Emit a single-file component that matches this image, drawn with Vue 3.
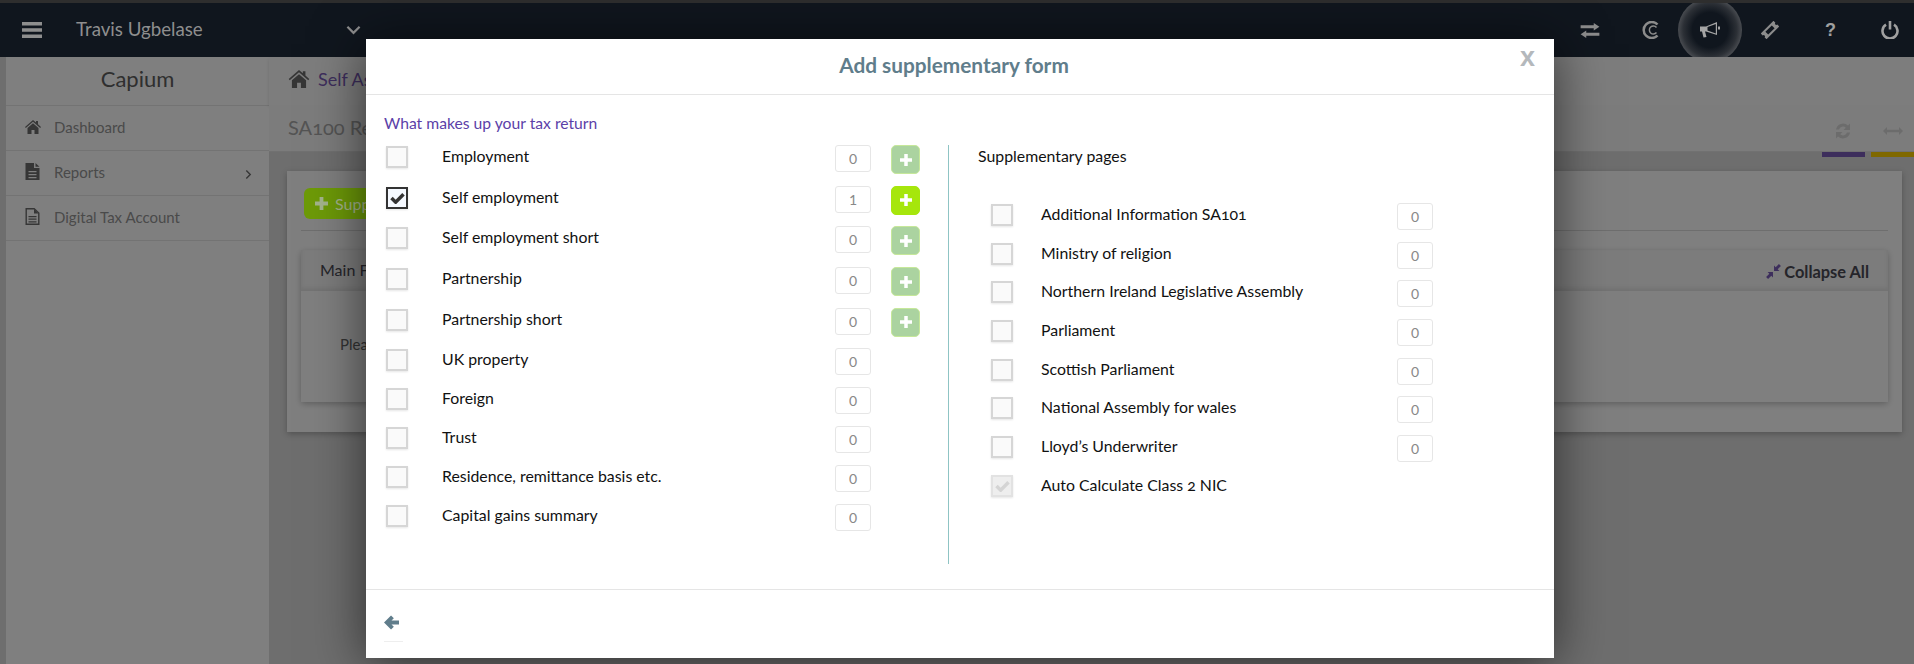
<script setup>
const leftRows = [
  { label: 'Employment', value: 0, add: true, checked: false },
  { label: 'Self employment', value: 1, add: true, checked: true },
  { label: 'Self employment short', value: 0, add: true, checked: false },
  { label: 'Partnership', value: 0, add: true, checked: false },
  { label: 'Partnership short', value: 0, add: true, checked: false },
  { label: 'UK property', value: 0, checked: false },
  { label: 'Foreign', value: 0, checked: false },
  { label: 'Trust', value: 0, checked: false },
  { label: 'Residence, remittance basis etc.', value: 0, checked: false },
  { label: 'Capital gains summary', value: 0, checked: false },
]
const rightRows = [
  'Additional Information SA101',
  'Ministry of religion',
  'Northern Ireland Legislative Assembly',
  'Parliament',
  'Scottish Parliament',
  'National Assembly for wales',
  'Lloyd’s Underwriter',
]
</script>

<template>
  <div class="page">
    <header class="topbar">
      <svg class="ic bars" viewBox="0 0 20 16"><path d="M0 0h20v3.600H0zM0 6.200h20v3.600H0zM0 12.400h20V16H0z" /></svg>
      <span class="user">Travis Ugbelase</span>
      <svg class="ic chev" viewBox="0 0 16 10"><path d="M1.500 1.500 8 8l6.500-6.500" fill="none" stroke="currentColor" stroke-width="2.400" /></svg>
      <div class="top-icons">
        <svg class="ic t1" viewBox="0 0 20 16"><path d="M14 0l6 4-6 4V5.500H0v-3h14zM6 8v2.500h14v3H6V16l-6-4z" /></svg>
        <svg class="ic t2" viewBox="0 0 18 18"><path d="M15.500 3.500A8 8 0 1 0 15.500 14.500" fill="none" stroke="currentColor" stroke-width="2.500" /><path d="M14.500 6.500A4 4 0 1 0 14.500 11.500" fill="none" stroke="currentColor" stroke-width="1.500" /></svg>
        <span class="pulse">
          <svg class="ic t3" viewBox="0 0 20 18"><path d="M0 5.500h6L17 1v13L6 10.500H5l1.500 5.500-3 .5L2 10.500H0z" /><path d="M15.800 3 7.500 6v3.500l8.300 3z" fill="#10161e" /><path d="M18 5.500h2v3h-2z" /></svg>
        </span>
        <svg class="ic t4" viewBox="0 0 20 20"><g transform="rotate(-45 10 10)"><path d="M0 5.500h20v3a1.500 1.500 0 0 0 0 3v3H0v-3a1.500 1.500 0 0 0 0-3zM5 7.800v4.400h10V7.800z" fill-rule="evenodd" /></g></svg>
        <span class="help">?</span>
        <svg class="ic t6" viewBox="0 0 18 18"><path d="M5 3.700a7.500 7.500 0 1 0 8 0" fill="none" stroke="currentColor" stroke-width="2.600" /><path d="M7.700 0h2.600v8.500H7.700z" /></svg>
      </div>
    </header>

    <div class="below">
      <aside class="sidebar">
        <div class="brand">Capium</div>
        <div class="nav-item">
          <span class="nav-slot"><svg class="nav-ic" viewBox="0 0 16 14"><path d="M8 0l3 2.600V1h2v3.300L16 7l-.8.900L8 1.700.8 7.900 0 7zM2.500 8 8 3.300 13.500 8v6H9.500v-4h-3v4h-4z" /></svg></span>
          <span>Dashboard</span>
        </div>
        <div class="nav-item">
          <span class="nav-slot"><svg class="nav-ic tall" viewBox="0 0 14 17"><path d="M0 0h8.500v5H14v12H0zM10 0l4 3.800h-4zM3 8v1.300h8V8zm0 3v1.300h8V11zm0 3v1.300h8V14z" fill-rule="evenodd" /></svg></span>
          <span>Reports</span>
          <svg class="nav-chev" viewBox="0 0 8 12"><path d="M1.500 1.500 6 6l-4.500 4.500" fill="none" stroke="currentColor" stroke-width="1.600" /></svg>
        </div>
        <div class="nav-item">
          <span class="nav-slot"><svg class="nav-ic tall" viewBox="0 0 14 17"><path d="M.7.700h8L13.300 5v11.300H.7z" fill="none" stroke="currentColor" stroke-width="1.400" /><path d="M8.500 1v4.500H13M3 8h8v1.200H3zm0 2.600h8v1.200H3zm0 2.600h8v1.200H3z" /></svg></span>
          <span>Digital Tax Account</span>
        </div>
      </aside>

      <main class="main">
        <div class="crumb">
          <svg class="crumb-ic" viewBox="0 0 16 14"><path d="M8 0l3 2.600V1h2v3.300L16 7l-.8.900L8 1.700.8 7.900 0 7zM2.500 8 8 3.300 13.500 8v6H9.500v-4h-3v4h-4z" /></svg>
          <span>Self As</span>
        </div>
        <div class="titlebar">
          <span class="title">SA100 Re</span>
          <div class="title-tools">
            <svg class="tool-ic" viewBox="0 0 18 18"><path d="M2 7.500A7.200 7.200 0 0 1 14 3.500L16 1.500V8h-6.500l2.300-2.300A4.200 4.200 0 0 0 5 7.500zM16 10.500A7.200 7.200 0 0 1 4 14.500L2 16.500V10h6.500l-2.300 2.300a4.200 4.200 0 0 0 6.800-1.800z" /></svg>
            <svg class="tool-ic wide" viewBox="0 0 20 10"><path d="M0 5l4-4v2.800h12V1l4 4-4 4V6.200H4V9z" /></svg>
          </div>
          <div class="bars-row"><i class="purple"></i><i class="gold"></i></div>
        </div>
        <section class="card">
          <div class="card-top">
            <button class="supp" type="button">
              <svg viewBox="0 0 11 11"><path d="M3.900 0h3.200v3.900H11v3.200H7.100V11H3.900V7.100H0V3.900h3.900z" /></svg>
              Supp
            </button>
          </div>
          <div class="panel">
            <div class="panel-head">
              <span class="main-f">Main F</span>
              <span class="collapse">
                <svg class="collapse-ic" viewBox="0 0 14 14"><path d="M13 1 9.500 4.500M1 13l3.500-3.500" fill="none" stroke="#7a5cb8" stroke-width="2.600" /><path d="M7.500 1.500 12.500 6.500H7.500zM6.500 12.500 1.500 7.500H6.500z" /></svg>
                Collapse All
              </span>
            </div>
            <div class="panel-body">Plea</div>
          </div>
        </section>
      </main>
    </div>

    <div class="overlay"></div>

    <div class="modal">
      <div class="modal-head">
        <h2>Add supplementary form</h2>
        <span class="close">x</span>
      </div>
      <div class="modal-body">
        <div class="left">
          <div class="intro">What makes up your tax return</div>
          <div v-for="r in leftRows" :key="r.label" class="row" :class="{ tight: !r.add }">
            <span class="box" :class="{ on: r.checked }">
              <svg v-if="r.checked" viewBox="0 0 16 13"><path d="M1.500 6.500 6 11l8.500-8.500" fill="none" stroke="currentColor" stroke-width="3.800" /></svg>
            </span>
            <span class="label">{{ r.label }}</span>
            <span class="num">{{ r.value }}</span>
            <span v-if="r.add" class="add" :class="{ live: r.value > 0 }">
              <svg viewBox="0 0 11 11"><path d="M3.900 0h3.200v3.900H11v3.200H7.100V11H3.900V7.100H0V3.900h3.900z" /></svg>
            </span>
          </div>
        </div>
        <div class="right">
          <div class="right-title">Supplementary pages</div>
          <div v-for="r in rightRows" :key="r" class="rrow">
            <span class="box"></span>
            <span class="label">{{ r }}</span>
            <span class="num">0</span>
          </div>
          <div class="rrow">
            <span class="box off">
              <svg viewBox="0 0 16 13"><path d="M1.500 6.500 6 11l8.500-8.500" fill="none" stroke="currentColor" stroke-width="3.800" /></svg>
            </span>
            <span class="label">Auto Calculate Class 2 NIC</span>
          </div>
        </div>
      </div>
      <div class="modal-foot">
        <svg class="back" viewBox="0 0 16 15"><path d="M7.500 0 10.500 3 8 5.300H16v4.400H8l2.500 2.300-3 3L0 7.500z" /></svg>
        <div class="foot-line"></div>
      </div>
    </div>
  </div>
</template>

<style>
html, body { margin: 0; overflow: hidden; }
</style>

<style scoped>
.page {
  position: relative;
  width: 1914px;
  height: 664px;
  overflow: hidden;
  background: #dcdcdc;
  font-family: Lato, "Noto Sans", sans-serif;
  font-variant-numeric: oldstyle-nums;
  color: #333;
}
.ic { fill: currentColor; display: block; flex: none; }

.topbar {
  position: relative;
  z-index: 2;
  height: 54px;
  border-top: 3px solid #2e2e2e;
  background: #10161e;
  display: flex;
  align-items: center;
  color: #8c8c8c;
  overflow: hidden;
}
.bars { width: 20px; height: 16px; margin-left: 22px; color: #8e8e8e; }
.user { margin-left: 34px; font-size: 18.700px; width: 270px; color: #8e8e8e; margin-top: -3px; }
.chev { width: 15px; height: 10px; color: #8e8e8e; }
.top-icons {
  margin-left: auto;
  width: 334px;
  height: 54px;
  display: flex;
  align-items: center;
  flex: none;
}
.t1 { width: 20px; height: 15px; }
.t2 { width: 18px; height: 18px; margin-left: 42px; }
.pulse {
  width: 64px;
  height: 64px;
  margin-left: 18px;
  flex: none;
  border-radius: 50%;
  display: flex;
  align-items: center;
  justify-content: center;
  background: radial-gradient(circle closest-side, #10161e 55%, #2c3036 84%, #484b50 100%);
}
.t3 { width: 20px; height: 18px; color: #a5a5a5; }
.t4 { width: 18px; height: 18px; margin-left: 19px; }
.help { margin-left: 46px; width: 11px; font: 700 18px "Liberation Sans", sans-serif; color: #a0a0a0; flex: none; }
.t6 { width: 18px; height: 18px; margin-left: 45px; color: #a0a0a0; }

.below { display: flex; height: 607px; }
.sidebar {
  width: 263px;
  margin-left: 6px;
  background: #fff;
  flex: none;
  color: #949494;
}
.brand {
  height: 48px;
  line-height: 43px;
  text-align: center;
  font-size: 22px;
  color: #5e5e5e;
  border-bottom: 1px solid #e6e6e6;
}
.nav-item {
  height: 45px;
  box-sizing: border-box;
  border-bottom: 1px solid #e6e6e6;
  display: flex;
  align-items: center;
  font-size: 15px;
  padding: 0 0 3px 19px;
}
.nav-slot { width: 29px; flex: none; display: flex; }
.nav-ic { width: 16px; height: 14px; fill: #6c6c6c; color: #6c6c6c; display: block; }
.nav-ic.tall { width: 15px; height: 17px; }
.nav-chev { width: 7px; height: 11px; margin-left: auto; margin-right: 17px; margin-top: 6px; color: #6c6c6c; }

.main { flex: 1; display: flex; flex-direction: column; min-width: 0; }
.crumb {
  height: 48px;
  background: #fafafa;
  box-shadow: 0 2px 4px rgba(0, 0, 0, .12);
  display: flex;
  align-items: center;
  padding: 0 0 4px 19px;
  box-sizing: border-box;
  font-size: 18px;
  color: #7a5cb8;
  position: relative;
}
.crumb-ic { width: 22px; height: 18px; fill: #6c6c6c; margin-right: 8px; }
.titlebar {
  height: 47px;
  background: #f8f8f8;
  border-bottom: 1px solid #e2e2e2;
  box-sizing: border-box;
  display: flex;
  align-items: center;
  padding-left: 19px;
  position: relative;
}
.title { font-size: 20px; color: #a8a8a8; margin-top: -2px; }
.title-tools { margin-left: auto; display: flex; align-items: center; margin-right: 11px; margin-top: 6px; }
.tool-ic { width: 20px; height: 18px; fill: #d8d8d8; }
.tool-ic.wide { width: 20px; height: 10px; margin-left: 30px; }
.bars-row {
  position: absolute;
  left: 1553px;
  top: 47px;
  display: flex;
  gap: 6px;
}
.bars-row i { display: block; height: 5px; }
.purple { width: 43px; background: #7a5cb8; }
.gold { width: 43px; background: #ffd000; }

.card {
  width: 1615px;
  height: 261px;
  margin: 19px 0 0 18px;
  background: #fff;
  box-shadow: 0 2px 6px rgba(0, 0, 0, .25);
  box-sizing: border-box;
  padding: 0 14px;
}
.card-top { height: 60px; border-bottom: 1px solid #dcdcdc; padding-top: 17px; box-sizing: border-box; }
.supp {
  position: relative;
  z-index: 2;
  width: 180px;
  height: 31px;
  margin-left: 3px;
  border: 0;
  border-radius: 6px;
  background: #6d9a08;
  color: #a3b38c;
  font: 16px Lato, sans-serif;
  display: flex;
  align-items: center;
  gap: 7px;
  padding-left: 11px;
}
.supp svg { width: 13px; height: 13px; fill: #a3b38c; }
.panel { margin-top: 19px; box-shadow: 0 2px 6px rgba(0, 0, 0, .25); border-radius: 3px; }
.panel-head {
  height: 41px;
  background: #f8f8f8;
  display: flex;
  align-items: center;
  justify-content: space-between;
  padding: 0 19px;
  font-size: 16px;
  color: #4a4a55;
  box-shadow: inset 0 -3px 4px rgba(0, 0, 0, .08);
}
.main-f { margin-top: -2px; }
.collapse { font-size: 16.400px; font-weight: 700; display: flex; align-items: center; gap: 3px; margin-top: 1px; }
.collapse-ic { width: 15px; height: 15px; fill: #7a5cb8; }
.panel-body { height: 111px; background: #fff; padding: 44px 39px 0; box-sizing: border-box; font-size: 15px; color: #666; }

.overlay { position: absolute; inset: 0; z-index: 1; background: rgba(0, 0, 0, .5); }

.modal {
  position: absolute;
  z-index: 3;
  left: 366px;
  top: 39px;
  width: 1188px;
  height: 619px;
  background: #fff;
  box-shadow: 0 5px 50px rgba(0, 0, 0, .6);
  display: flex;
  flex-direction: column;
  color: #111;
}
.modal-head {
  height: 56px;
  box-sizing: border-box;
  flex: none;
  border-bottom: 1px solid #e5e5e5;
  display: flex;
  align-items: center;
  justify-content: center;
  position: relative;
  padding-right: 12px;
}
.modal-head h2 {
  margin: -4px 0 0;
  font-size: 20.800px;
  font-weight: 700;
  color: #607d8b;
}
.close {
  position: absolute;
  right: 19px;
  top: 3px;
  font: 700 27px "Liberation Sans", sans-serif;
  color: #b4b8bc;
}
.modal-body { flex: 1; display: flex; }
.left { width: 582px; flex: none; box-sizing: border-box; padding-left: 20px; position: relative; }
.left::after {
  content: "";
  position: absolute;
  left: 582px;
  top: 50px;
  height: 419px;
  width: 1px;
  background: #8fc4c4;
}
.intro { height: 51px; padding-top: 19px; margin-left: -2px; box-sizing: border-box; font-size: 15.700px; color: #5c3fa8; }
.row {
  height: 40.700px;
  display: flex;
  align-items: flex-start;
  font-size: 15.850px;
}
.row.tight { height: 38.900px; }
.box {
  width: 22px;
  height: 22px;
  box-sizing: border-box;
  flex: none;
  border: 2px solid #d6d6d6;
  background: #fafafa;
  box-shadow: 0 1px 2px rgba(0, 0, 0, .1);
  display: flex;
  align-items: center;
  justify-content: center;
}
.box svg { width: 15px; height: 12px; }
.box.on { border-color: #333; background: #f5f9ff; color: #333; }
.box.off { background: #eee; border-color: #e2e2e2; color: #d4d4d4; }
.label { margin-left: 34px; width: 393px; line-height: 20px; flex: none; }
.num {
  width: 36px;
  height: 27px;
  margin-top: -1px;
  box-sizing: border-box;
  border: 1px solid #e6e6e6;
  border-radius: 3px;
  display: flex;
  align-items: center;
  justify-content: center;
  font-size: 14px;
  font-variant-numeric: lining-nums;
  color: #888;
  flex: none;
}
.add {
  width: 29px;
  height: 29px;
  margin-left: 20px;
  margin-top: -1px;
  border-radius: 5px;
  background: #abd3a0;
  border: 1px solid #c6e89a;
  box-sizing: border-box;
  display: flex;
  align-items: center;
  justify-content: center;
  flex: none;
}
.add.live { background: #a6e60c; border-color: #a6e60c; }
.add svg { width: 12px; height: 12px; fill: #fff; }
.right { flex: 1; }
.right-title { height: 109px; padding-top: 51px; box-sizing: border-box; font-size: 15.850px; margin-left: 30px; }
.rrow {
  height: 38.700px;
  display: flex;
  align-items: flex-start;
  font-size: 15.850px;
  margin-left: 43px;
}
.rrow .label { margin-left: 28px; width: 356px; }
.modal-foot {
  height: 69px;
  flex: none;
  border-top: 1px solid #e5e5e5;
  padding: 25px 0 0 18px;
  box-sizing: border-box;
}
.back { display: block; width: 15px; height: 15px; fill: #607d8b; }
.foot-line { width: 19px; height: 1px; background: #eee; margin-top: 11px; }
</style>
